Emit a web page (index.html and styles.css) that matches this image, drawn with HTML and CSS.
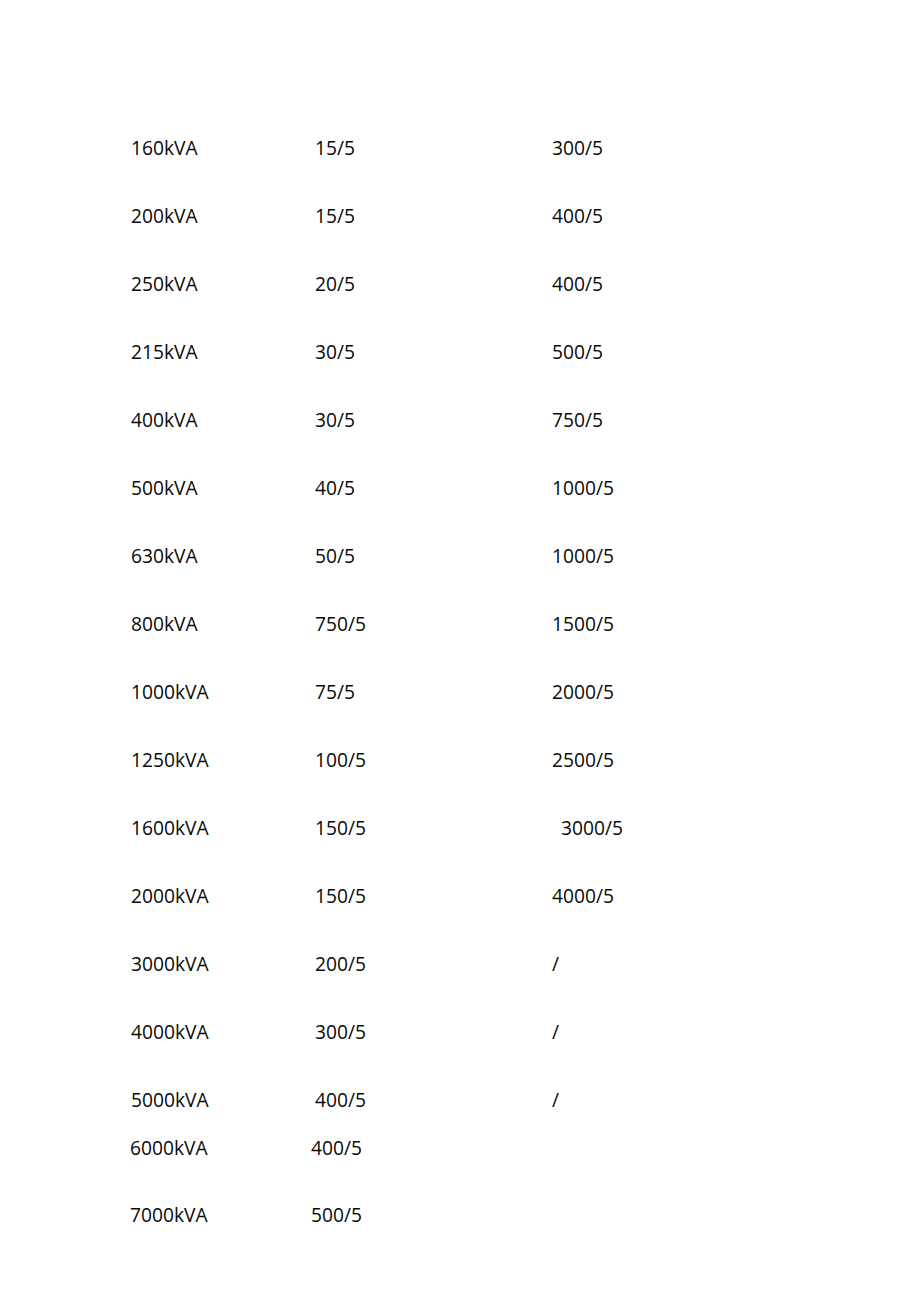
FILE: index.html
```html
<!DOCTYPE html>
<html>
<head>
<meta charset="utf-8">
<link rel="stylesheet" href="styles.css">
</head>
<body>
<div class="table">
  <div class="row"><span class="c1">160kVA</span><span class="c2">15/5</span><span class="c3">300/5</span></div>
  <div class="row"><span class="c1">200kVA</span><span class="c2">15/5</span><span class="c3">400/5</span></div>
  <div class="row"><span class="c1">250kVA</span><span class="c2">20/5</span><span class="c3">400/5</span></div>
  <div class="row"><span class="c1">215kVA</span><span class="c2">30/5</span><span class="c3">500/5</span></div>
  <div class="row"><span class="c1">400kVA</span><span class="c2">30/5</span><span class="c3">750/5</span></div>
  <div class="row"><span class="c1">500kVA</span><span class="c2">40/5</span><span class="c3">1000/5</span></div>
  <div class="row"><span class="c1">630kVA</span><span class="c2">50/5</span><span class="c3">1000/5</span></div>
  <div class="row"><span class="c1">800kVA</span><span class="c2">750/5</span><span class="c3">1500/5</span></div>
  <div class="row"><span class="c1">1000kVA</span><span class="c2">75/5</span><span class="c3">2000/5</span></div>
  <div class="row"><span class="c1">1250kVA</span><span class="c2">100/5</span><span class="c3">2500/5</span></div>
  <div class="row"><span class="c1">1600kVA</span><span class="c2">150/5</span><span class="c3 indent">3000/5</span></div>
  <div class="row"><span class="c1">2000kVA</span><span class="c2">150/5</span><span class="c3">4000/5</span></div>
  <div class="row"><span class="c1">3000kVA</span><span class="c2">200/5</span><span class="c3">/</span></div>
  <div class="row"><span class="c1">4000kVA</span><span class="c2">300/5</span><span class="c3">/</span></div>
  <div class="row"><span class="c1">5000kVA</span><span class="c2">400/5</span><span class="c3">/</span></div>
  <div class="row tight"><span class="c1 shift">6000kVA</span><span class="c2 shift2">400/5</span></div>
  <div class="row last"><span class="c1 shift">7000kVA</span><span class="c2 shift2">500/5</span></div>
</div>
</body>
</html>
```
FILE: styles.css
```css
html, body {
  margin: 0;
  padding: 0;
  background: #ffffff;
}
body {
  font-family: "Open Sans", "Liberation Sans", sans-serif;
  font-size: 19.2px;
  color: #0a0a0a;
}
.table {
  padding-top: 114px;
  padding-left: 131px;
}
.row {
  display: flex;
  height: 68px;
  line-height: 68px;
  white-space: nowrap;
}
.c1 {
  width: 184px;
  flex: none;
}
.c2 {
  width: 237px;
  flex: none;
}
.c3 {
  flex: none;
}
.indent {
  padding-left: 9px;
}
.tight {
  margin-top: -20px;
}
.last {
  margin-top: -1px;
}
.shift {
  margin-left: -1px;
}
.shift2 {
  margin-left: -3px;
}
```
